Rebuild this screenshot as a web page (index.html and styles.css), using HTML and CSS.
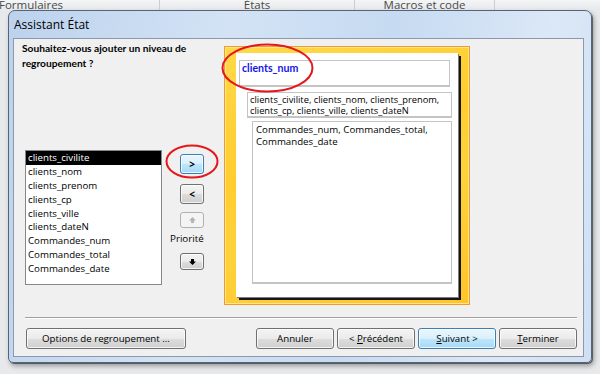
FILE: index.html
```html
<!DOCTYPE html>
<html lang="fr">
<head>
<meta charset="utf-8">
<title>Assistant État</title>
<link rel="stylesheet" href="styles.css">
</head>
<body>
<div class="ribbon">
  <div class="tab tab-forms">Formulaires</div>
  <div class="tab tab-etats">États</div>
  <div class="tab tab-macros">Macros et code</div>
  <div class="tab tab-end"></div>
</div>
<div class="window">
  <div class="titlebar">Assistant État</div>
  <div class="client">
    <div class="main">
      <div class="left">
        <p class="question">Souhaitez-vous ajouter un niveau de<br>regroupement ?</p>
        <div class="pick">
          <ul class="listbox">
            <li class="selected">clients_civilite</li>
            <li>clients_nom</li>
            <li>clients_prenom</li>
            <li>clients_cp</li>
            <li>clients_ville</li>
            <li>clients_dateN</li>
            <li>Commandes_num</li>
            <li>Commandes_total</li>
            <li>Commandes_date</li>
          </ul>
          <div class="mid">
            <button class="sbtn hot btn-add">&gt;</button>
            <button class="sbtn btn-remove">&lt;</button>
            <button class="sbtn disabled btn-up"><svg width="7" height="6" viewBox="0 0 7 6"><path d="M3.5 0L7 3.5H5V6H2V3.5H0z" fill="#b4b4b4"/></svg></button>
            <span class="prio">Priorité</span>
            <button class="sbtn btn-down"><svg width="7" height="6" viewBox="0 0 7 6"><path d="M2 0h3v2.5h2L3.5 6 0 2.5h2z" fill="#000"/></svg></button>
          </div>
        </div>
      </div>
      <div class="preview">
        <div class="page">
          <div class="box b1">clients_num</div>
          <div class="box b2">clients_civilite, clients_nom, clients_prenom,<br>clients_cp, clients_ville, clients_dateN</div>
          <div class="box b3">Commandes_num, Commandes_total,<br>Commandes_date</div>
        </div>
      </div>
    </div>
    <div class="sep"></div>
    <div class="footer">
      <button class="btn btn-opt">Options de regroupement ...</button>
      <button class="btn btn-cancel">Annuler</button>
      <button class="btn">&lt; <u>P</u>récédent</button>
      <button class="btn default"><u>S</u>uivant &gt;</button>
      <button class="btn"><u>T</u>erminer</button>
    </div>
  </div>
</div>
<svg class="annot" width="600" height="374" viewBox="0 0 600 374">
  <ellipse cx="267.5" cy="68" rx="45" ry="23.5" fill="none" stroke="#e3171c" stroke-width="2"/>
  <ellipse cx="192" cy="161.5" rx="25.5" ry="16" fill="none" stroke="#e3171c" stroke-width="2"/>
</svg>
</body>
</html>
```
FILE: styles.css
```css
* { box-sizing: border-box; }
html, body { margin: 0; padding: 0; }
body {
  width: 600px;
  height: 374px;
  overflow: hidden;
  position: relative;
  background: #e8e9eb;
  font-family: "Open Sans", "Noto Sans", sans-serif;
  font-size: 9.7px;
  color: #000;
}
.ribbon {
  display: flex;
  height: 10px;
  background: linear-gradient(#f4f5f6, #e6e8eb);
  overflow: hidden;
}
.tab {
  border-right: 1px solid #cbcdd1;
  font-size: 11.5px;
  line-height: 12px;
  margin-top: -1px;
  color: #4a4a4a;
  white-space: nowrap;
}
.tab-forms { width: 160px; text-indent: -1px; }
.tab-etats { width: 195px; text-align: center; }
.tab-macros { width: 140px; text-align: center; }
.tab-end { flex: 1; border-right: 0; }

.window {
  position: absolute;
  left: 8px;
  top: 10px;
  width: 584px;
  height: 353px;
  border: 1px solid #56647a;
  border-radius: 7px 7px 5px 5px;
  background: linear-gradient(100deg, #bcd2ed 0%, #d3e3f5 35%, #c6daf1 60%, #dbe8f7 85%, #cfe0f4 100%);
  box-shadow: 1px 1px 0 rgba(0,0,0,0.45), 2px 3px 5px rgba(0,0,0,0.35);
  display: flex;
  flex-direction: column;
}
.titlebar {
  height: 27px;
  line-height: 27px;
  padding-left: 5px;
  font-size: 12px;
  color: #000;
}
.client {
  flex: 1;
  margin: 0 7px 5px 4px;
  border: 1px solid #8c99aa;
  background: #f0f0f0;
  display: flex;
  flex-direction: column;
}
.main {
  display: flex;
  height: 272px;
}
.left {
  width: 210px;
  padding: 2px 0 0 8px;
}
.question {
  margin: 0;
  height: 30px;
  font-family: "Lato", "Open Sans", sans-serif;
  font-weight: 700;
  font-size: 10.2px;
  line-height: 15px;
  white-space: nowrap;
}
.pick {
  display: flex;
  margin-top: 79px;
}
.listbox {
  list-style: none;
  margin: 0 0 0 3px;
  padding: 0;
  width: 137px;
  height: 135px;
  border: 1px solid #828790;
  background: #fff;
}
.listbox li {
  height: 13.9px;
  line-height: 13.9px;
  padding-left: 2px;
  white-space: nowrap;
}
.listbox li.selected {
  background: #000;
  color: #fff;
}
.mid {
  width: 62px;
  display: flex;
  flex-direction: column;
  align-items: flex-start;
  padding-left: 8px;
}
.sbtn {
  width: 24px;
  height: 20px;
  margin-left: 10px;
  padding: 0;
  border: 1px solid #707070;
  border-radius: 3px;
  background: linear-gradient(#f4f4f4 0%, #ebebeb 50%, #dddddd 51%, #cfcfcf 100%);
  box-shadow: inset 0 0 0 1px rgba(255,255,255,0.75);
  font-family: inherit;
  font-size: 10px;
  font-weight: 700;
  line-height: 16px;
  color: #000;
  display: flex;
  align-items: center;
  justify-content: center;
}
.sbtn.hot {
  border-color: #3c7fb1;
  background: linear-gradient(#eaf6fd 0%, #d9f0fc 50%, #bee6fd 51%, #a7d9f5 100%);
}
.btn-add { margin-top: 4px; }
.btn-remove { margin-top: 10px; }
.btn-up {
  margin-top: 8px;
  height: 16px;
}
.sbtn.disabled {
  border-color: #adb2b5;
  background: #f4f4f4;
  box-shadow: none;
}
.prio {
  margin-top: 4px;
  line-height: 13px;
  font-size: 9.8px;
}
.btn-down {
  margin-top: 8px;
  height: 17px;
}
.preview {
  margin-top: 7px;
  width: 246px;
  height: 259px;
  border: 1px solid #f29a2c;
  background: linear-gradient(160deg, #ffd84a 0%, #ffcd2e 40%, #ffd23c 60%, #ffc42a 100%);
  box-shadow: inset 0 0 0 1px #ffe58f;
  padding: 6px 0 0 11px;
}
.page {
  width: 222px;
  height: 244px;
  background: #fff;
  box-shadow: 1px 1px 0 #7a7a7a, 3px 3px 0 #161616;
  display: flex;
  flex-direction: column;
  align-items: flex-start;
  padding-top: 7px;
}
.box {
  border: 1px solid #c4c4c4;
  border-bottom-width: 2px;
  white-space: nowrap;
}
.b1 {
  margin-left: 3px;
  width: 211px;
  height: 27px;
  padding: 1px 0 0 2px;
  color: #1515e8;
  font-family: "Lato", "Open Sans", sans-serif;
  font-weight: 700;
  font-size: 10.6px;
  line-height: 13px;
}
.b2 {
  margin: 5px 0 0 11px;
  width: 205px;
  height: 26px;
  padding: 1px 0 0 2px;
  font-size: 9.3px;
  line-height: 11px;
}
.b3 {
  margin: 3px 0 0 16px;
  width: 200px;
  height: 163px;
  padding: 2px 0 0 3px;
  line-height: 12px;
}
.sep {
  margin: 6px 6px 0 11px;
  height: 2px;
  border-top: 1px solid #a0a0a0;
  border-bottom: 1px solid #ffffff;
}
.footer {
  display: flex;
  margin-top: 9px;
  padding: 0 6px 0 12px;
  gap: 3px;
}
.btn {
  height: 21px;
  width: 78px;
  padding: 0;
  border: 1px solid #707070;
  border-radius: 3px;
  background: linear-gradient(#f4f4f4 0%, #ebebeb 50%, #dddddd 51%, #cfcfcf 100%);
  box-shadow: inset 0 0 0 1px rgba(255,255,255,0.75);
  font-family: inherit;
  font-size: 9.7px;
  line-height: 17px;
  color: #000;
  text-align: center;
  white-space: nowrap;
}
.btn u { text-decoration: underline; text-underline-offset: 1px; }
.btn.default {
  border-color: #3c7fb1;
  background: linear-gradient(#eaf6fd 0%, #d9f0fc 50%, #bee6fd 51%, #a7d9f5 100%);
}
.btn-opt { width: 160px; }
.btn-cancel { margin-left: auto; }
.annot {
  position: absolute;
  left: 0;
  top: 0;
  pointer-events: none;
}
```
